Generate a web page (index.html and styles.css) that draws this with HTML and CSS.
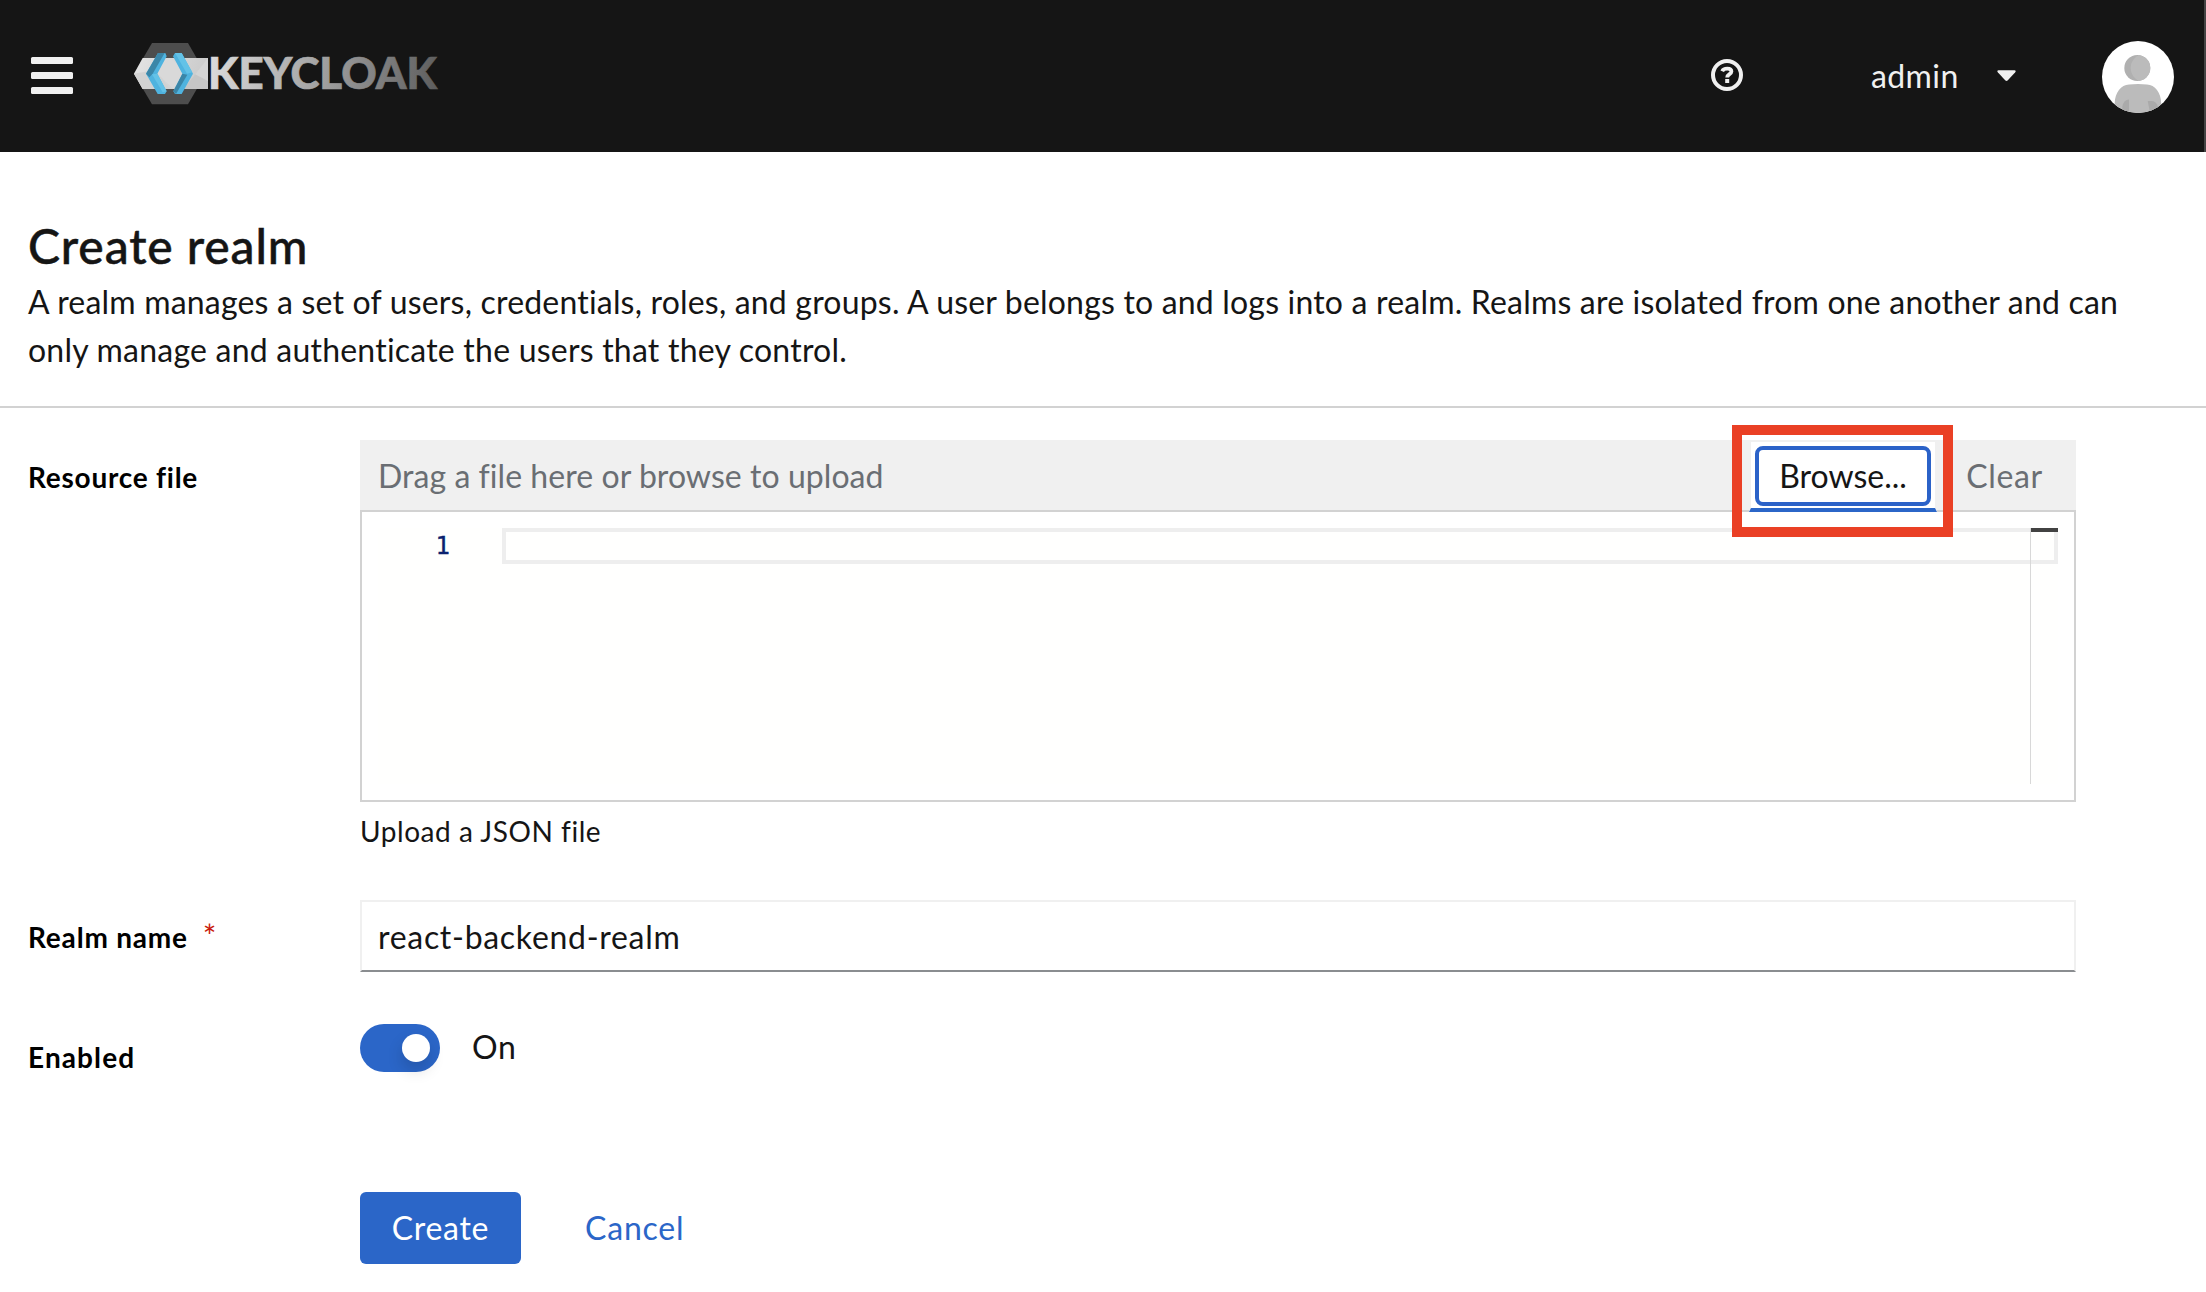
FILE: index.html
```html
<!DOCTYPE html>
<html lang="en">
<head>
<meta charset="utf-8">
<title>Create realm</title>
<link rel="stylesheet" href="styles.css">
</head>
<body>
<header class="masthead">
  <button class="menu" aria-label="Menu"><span></span><span></span><span></span></button>
  <svg class="logo" viewBox="0 0 306 64" role="img" aria-label="Keycloak">
    <defs>
      <linearGradient id="word" gradientUnits="userSpaceOnUse" x1="76" x2="304" y1="20" y2="40">
        <stop offset="0" stop-color="#dadada"/><stop offset=".45" stop-color="#a6a6a6"/><stop offset="1" stop-color="#5e5e5e"/>
      </linearGradient>
      <linearGradient id="band" x1="0" x2="1" y1="0" y2=".2">
        <stop offset="0" stop-color="#e4e4e4"/><stop offset="1" stop-color="#cbcbcb"/>
      </linearGradient>
    </defs>
    <g transform="translate(-14 -10) scale(.33333)">
      <path fill="#4d4d4d" d="M96 36H204L257 128L204 220H96L42 128Z"/>
      <path fill="url(#band)" d="M68 81H264V174H68L42 128Z"/>
      <path fill="#d2d2d2" d="M42 128L110 116L150 174H68Z"/>
      <path fill="#d9d9d9" d="M150 81L110 125L160 174L200 120Z"/>
      <path fill="#c6c6c6" d="M190 174L226 130L264 150V174Z"/>
      <path fill="#d4d4d4" d="M226 130L264 81V150Z"/>
      <path fill="#4fb3df" d="M114 66H136L140 76L112 128L140 181L135 189H113L78 128Z"/>
      <path fill="#3b86a8" d="M114 66H134L98 128L88 139L78 128Z"/>
      <path fill="#63c2e7" d="M96 130L112 128L140 181L128 184Z"/>
      <path fill="#4fb3df" d="M165 66H185L219 128L185 189H165L160 181L187 128L159 76Z"/>
      <path fill="#63c2e7" d="M165 66H185L217 124L201 128L170 74Z"/>
      <path fill="#3b86a8" d="M187 128L202 131L168 189L160 181Z"/>
    </g>
    <text class="wordmark" x="74" y="48" textLength="229" lengthAdjust="spacingAndGlyphs" fill="url(#word)" stroke="url(#word)" stroke-width=".7">KEYCLOAK</text>
  </svg>
  <div class="tools">
    <svg class="help" viewBox="0 0 32 32" aria-label="Help">
      <circle cx="16" cy="16" r="14" fill="none" stroke="#f0f0f0" stroke-width="4"/>
      <path d="M11.2 12.2C12 10.3 14 9.7 16.3 9.7C19 9.7 20.4 10.9 20.4 12.6C20.4 15.4 16.2 15 16.2 18.6" fill="none" stroke="#f0f0f0" stroke-width="3.8"/>
      <rect x="14.2" y="20" width="4" height="4" fill="#f0f0f0"/>
    </svg>
    <div class="user">
      <span>admin</span>
      <svg class="caret" viewBox="0 0 20 12"><path d="M1.6 0H18.4Q20.4.4 19.2 2L11.4 10.6Q10 11.9 8.6 10.6L.8 2Q-.4.4 1.6 0Z" fill="#f0f0f0"/></svg>
    </div>
    <svg class="avatar" viewBox="0 0 72 72" aria-label="Account">
      <defs>
        <clipPath id="disc"><circle cx="36" cy="36" r="36"/></clipPath>
        <clipPath id="head"><circle cx="35.3" cy="27" r="13"/></clipPath>
      </defs>
      <g clip-path="url(#disc)">
        <rect width="72" height="72" fill="#fff"/>
        <circle cx="35.3" cy="27" r="13" fill="#b0b0b0"/>
        <circle cx="43" cy="27" r="14.3" fill="#bbb" clip-path="url(#head)"/>
        <path fill="#bbb" d="M12.7 72V62C13 52 19 43.6 27 43.6Q36 42.6 45 43.6C53 43.6 59 52 59.2 62V72Z"/>
        <path fill="#aaa" d="M20.3 72V66Q21.500 58.500 27 58.500V72Z"/>
        <path fill="#aaa" d="M48 72L45.700 60H50Q54.500 60.500 56 66V72Z"/>
      </g>
    </svg>
  </div>
</header>

<section class="intro">
  <h1>Create realm</h1>
  <p><span class="first">A realm manages a set of users, credentials, roles, and groups. A user belongs to and logs into a realm. Realms are isolated from one another and can</span> <span class="second">only manage and authenticate the users that they control.</span></p>
</section>

<form class="form">
  <div class="row">
    <label class="label">Resource file</label>
    <div class="field">
      <div class="upload">
        <div class="upload-bar">
          <span class="placeholder">Drag a file here or browse to upload</span>
          <button type="button" class="browse"><span>Browse...</span></button>
          <button type="button" class="clear">Clear</button>
        </div>
        <div class="editor">
          <div class="gutter">1</div>
          <div class="code">
            <div class="line"></div>
            <div class="ruler"></div>
          </div>
        </div>
        <div class="highlight"></div>
      </div>
      <div class="helper">Upload a JSON file</div>
    </div>
  </div>
  <div class="row row-name">
    <label class="label tight" for="realm">Realm name<span class="required">*</span></label>
    <input class="input" id="realm" value="react-backend-realm">
  </div>
  <div class="row">
    <label class="label wide">Enabled</label>
    <div class="switch"><span class="track"><span class="knob"></span></span><span class="state">On</span></div>
  </div>
  <div class="actions">
    <button type="button" class="create">Create</button>
    <button type="button" class="cancel">Cancel</button>
  </div>
</form>
</body>
</html>
```
FILE: styles.css
```css
* { box-sizing: border-box; }
body {
  margin: 0;
  background: #fff;
  color: #151515;
  font: 400 32px/48px Lato, "Open Sans", sans-serif;
  font-variant-ligatures: none;
}
button { margin: 0; padding: 0; border: 0; background: none; font: inherit; color: inherit; }

.masthead {
  display: flex;
  align-items: center;
  height: 152px;
  padding: 0 30px 0 31px;
  background: #151515;
  border-right: 2px solid #444;
  color: #f0f0f0;
}
.menu { display: grid; gap: 8px; width: 42px; margin-top: -1px; }
.menu span { height: 7px; border-radius: 1.5px; background: #f0f0f0; }
.logo { width: 306px; height: 64px; margin: -7px 0 0 61px; }
.wordmark { font: 900 43px Lato, sans-serif; }
.tools { display: flex; align-items: center; margin-left: auto; }
.help { width: 32px; height: 32px; margin-top: -2px; }
.user { display: flex; align-items: center; gap: 37px; margin: 0 86px 0 128px; width: 145px; justify-content: space-between; letter-spacing: .4px; }
.user span { margin-top: -1px; }
.caret { width: 19px; height: 12px; flex: none; }
.avatar { width: 72px; height: 72px; margin-top: 1px; }

.intro { padding: 62px 28px 32px; border-bottom: 2px solid #d2d2d2; }
h1 { margin: 0; font-size: 48px; line-height: 64px; font-weight: 500; letter-spacing: .9px; -webkit-text-stroke: .5px #151515; }
.intro p { margin: 0; }
.first { display: block; white-space: nowrap; letter-spacing: .19px; }
.second { display: block; letter-spacing: .22px; }

.form { display: flex; flex-direction: column; gap: 48px; padding: 32px 130px 0 28px; }
.row { display: grid; grid-template-columns: 332px 1fr; align-items: start; }
.label { padding-top: 16px; color: #000; font-size: 28px; line-height: 42px; font-weight: 700; letter-spacing: .75px; }
.tight { letter-spacing: .8px; }
.wide { letter-spacing: 1.1px; }
.required { margin-left: 15px; color: #c9190b; font-size: 32px; line-height: 1; font-weight: 400; }

.upload { position: relative; }
.upload-bar { display: flex; align-items: stretch; height: 72px; background: #f0f0f0; border-bottom: 2px solid #d2d2d2; color: #6a6e73; }
.placeholder { flex: 1; padding-left: 18px; line-height: 72px; letter-spacing: .05px; }
.browse {
  width: 188px;
  height: 72px;
  padding: 4px;
  background: #fff;
  border: 2px solid #f0f0f0;
  border-bottom: 4px solid #2b66c8;
  color: #151515;
}
.browse span { display: block; height: 60px; border: 4px solid #2b62c8; border-radius: 8px; line-height: 52px; }
.clear { width: 139px; height: 70px; padding: 2px 4px 0 0; letter-spacing: .6px; }
.editor { display: flex; height: 290px; padding: 16px 16px 16px 0; border: 2px solid #d2d2d2; border-top: 0; }
.gutter { width: 124px; margin-left: 16px; padding-right: 52px; background: #fffffe; text-align: right; color: #0b216f; font: 24px/36px "DejaVu Sans Mono", monospace; -webkit-text-stroke: .4px #0b216f; }
.code { position: relative; flex: 1; background: #fffffe; }
.line { height: 36px; border: 4px solid #eee; }
.ruler { position: absolute; top: 0; right: 0; width: 28px; height: 256px; border-left: 1px solid #d8d8d8; }
.ruler::before { content: ""; display: block; height: 4px; background: #424242; }
.highlight { position: absolute; left: 1372px; top: -15px; width: 221px; height: 112px; border: 10px solid #ea4025; }
.helper { margin-top: 8px; font-size: 28px; line-height: 42px; letter-spacing: .55px; }

.input {
  width: 100%;
  height: 72px;
  padding: 0 16px;
  background: #fff;
  border: 2px solid #f0f0f0;
  border-bottom-color: #8a8d90;
  font: inherit;
  color: #151515;
  letter-spacing: .7px;
  outline: 0;
}
.switch { display: flex; align-items: center; gap: 32px; padding-top: 4px; letter-spacing: .8px; }
.track { width: 80px; height: 48px; padding: 10px; border-radius: 24px; background: #2b66c8; }
.knob { display: block; width: 28px; height: 28px; margin-left: auto; border-radius: 50%; background: #fff; box-shadow: 0 8px 16px rgba(3, 3, 3, .16); }
.state { margin-top: -2px; }

.actions { display: flex; gap: 64px; margin: 66px 0 0 332px; }
.actions button { height: 72px; padding-bottom: 1px; }
.actions .create { width: 161px; border-radius: 6px; background: #2b66c8; color: #fff; letter-spacing: .7px; }
.actions .cancel { color: #2b66c8; letter-spacing: .8px; }
```
